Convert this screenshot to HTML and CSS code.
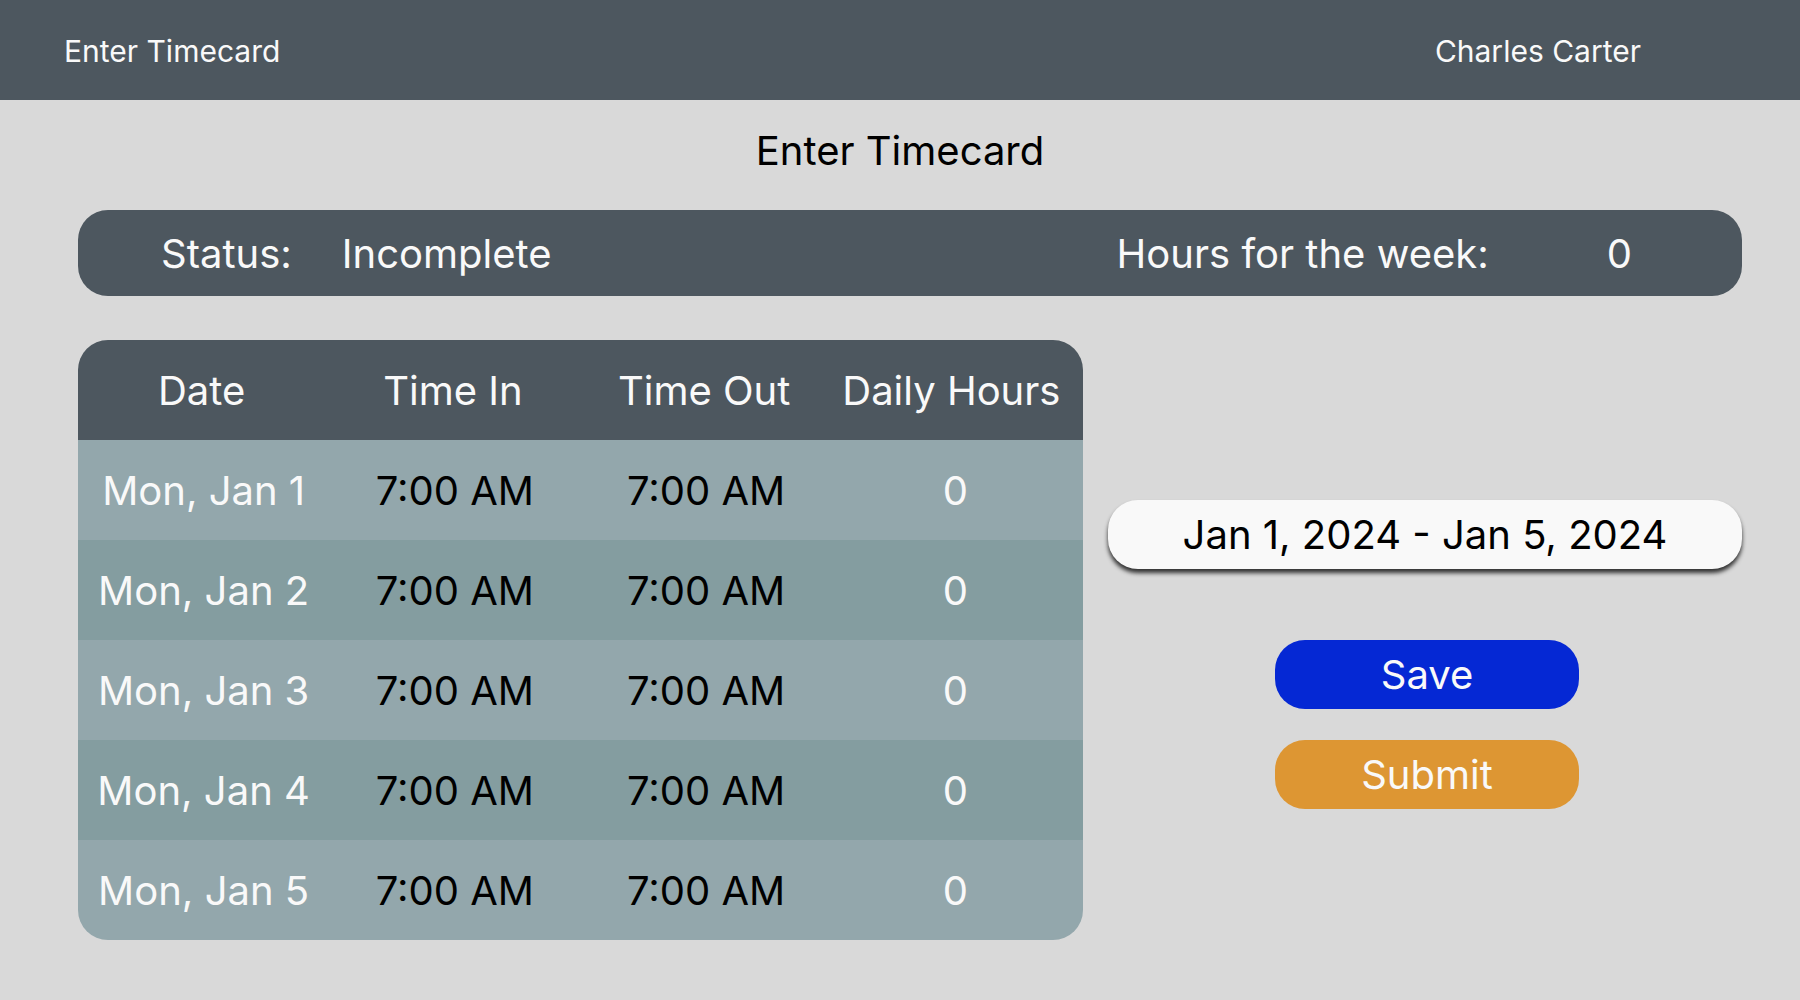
FILE: index.html
```html
<!DOCTYPE html>
<html lang="en">
<head>
<meta charset="utf-8">
<title>Enter Timecard</title>
<link rel="stylesheet" href="styles.css">
</head>
<body>
<header class="topbar">
  <span>Enter Timecard</span>
  <span>Charles Carter</span>
</header>
<main class="page">
  <h1 class="title">Enter Timecard</h1>
  <section class="summary">
    <span class="summary-label">Status:</span>
    <span class="summary-status">Incomplete</span>
    <span class="summary-hours">Hours for the week:</span>
    <span class="summary-total">0</span>
  </section>
  <div class="content">
    <table class="timecard">
      <thead>
        <tr><th>Date</th><th>Time In</th><th>Time Out</th><th>Daily Hours</th></tr>
      </thead>
      <tbody>
        <tr><td>Mon, Jan 1</td><td class="time">7:00 AM</td><td class="time">7:00 AM</td><td>0</td></tr>
        <tr><td>Mon, Jan 2</td><td class="time">7:00 AM</td><td class="time">7:00 AM</td><td>0</td></tr>
        <tr><td>Mon, Jan 3</td><td class="time">7:00 AM</td><td class="time">7:00 AM</td><td>0</td></tr>
        <tr><td>Mon, Jan 4</td><td class="time">7:00 AM</td><td class="time">7:00 AM</td><td>0</td></tr>
        <tr><td>Mon, Jan 5</td><td class="time">7:00 AM</td><td class="time">7:00 AM</td><td>0</td></tr>
      </tbody>
    </table>
    <div class="actions">
      <button type="button" class="period">Jan 1, 2024 - Jan 5, 2024</button>
      <div class="buttons">
        <button type="button" class="button save">Save</button>
        <button type="button" class="button submit">Submit</button>
      </div>
    </div>
  </div>
</main>
</body>
</html>
```
FILE: styles.css
```css
* {
  box-sizing: border-box;
}

body {
  margin: 0;
  min-height: 100vh;
  background: #d9d9d9;
  color: #000;
  font: 400 40px/48px Inter, "Liberation Sans", sans-serif;
}

.topbar {
  display: flex;
  justify-content: space-between;
  align-items: center;
  height: 100px;
  padding: 2px 159px 0 64px;
  background: #4d575f;
  color: #f9f9f9;
  font-size: 30px;
}

.page {
  padding: 27px 58px 60px 78px;
}

.title {
  margin: 0 20px 35px 0;
  font-size: 40px;
  font-weight: 400;
  text-align: center;
}

.summary {
  display: flex;
  align-items: center;
  height: 86px;
  padding: 2px 110px 0 83px;
  border-radius: 30px;
  background: #4d575f;
  color: #f9f9f9;
}

.summary-status {
  margin-left: 50px;
}

.summary-hours {
  margin-left: auto;
}

.summary-total {
  margin-left: 118px;
}

.content {
  display: grid;
  grid-template-columns: 1005fr 634fr;
  align-items: center;
  gap: 25px;
  margin-top: 44px;
}

.timecard {
  width: 100%;
  table-layout: fixed;
  border-collapse: collapse;
  border-radius: 30px;
  overflow: hidden;
  color: #f9f9f9;
}

.timecard th,
.timecard td {
  height: 100px;
  padding: 2px 0 0;
  font-weight: 400;
  text-align: center;
}

.timecard th {
  padding-right: 4px;
}

.timecard th:last-child {
  padding-right: 12px;
}

.timecard td:last-child {
  padding-right: 4px;
}

.timecard thead tr {
  background: #4d575f;
}

.timecard tbody tr:nth-child(odd) {
  background: #93a7ac;
}

.timecard tbody tr:nth-child(even) {
  background: #849da0;
}

.timecard .time {
  color: #000;
}

.actions {
  display: flex;
  flex-direction: column;
  gap: 71px;
  padding-top: 28px;
}

.buttons {
  display: flex;
  flex-direction: column;
  align-items: center;
  gap: 31px;
  padding-left: 4px;
}

.period,
.button {
  height: 69px;
  padding: 2px 0 0;
  border: 0;
  border-radius: 30px;
  font: inherit;
  color: #f9f9f9;
}

.period {
  background: #f9f9f9;
  color: #000;
  box-shadow: 0 4px 4px #333;
}

.button {
  width: 304px;
}

.save {
  background: #0528d4;
}

.submit {
  background: #dd9633;
}
```
